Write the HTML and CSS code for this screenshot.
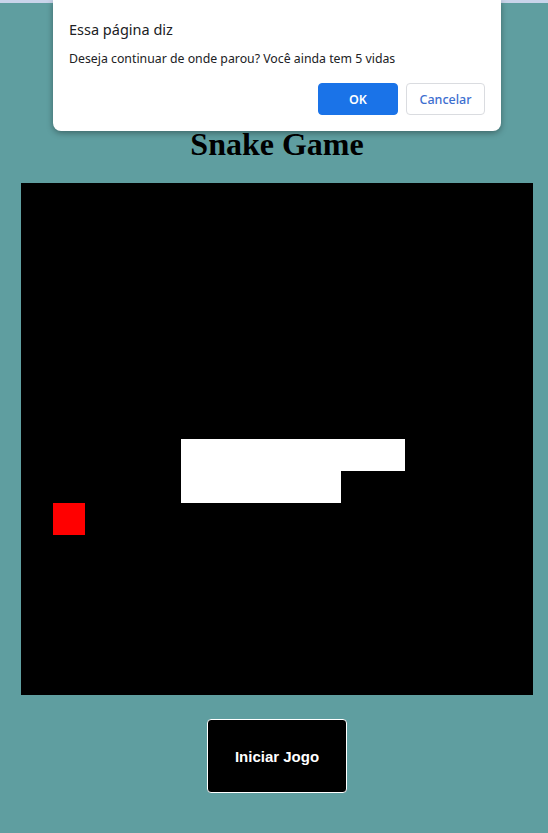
FILE: index.html
```html
<!DOCTYPE html>
<html lang="pt-BR">
<head>
<meta charset="utf-8">
<title>Snake Game</title>
<link rel="stylesheet" href="styles.css">
</head>
<body>
<div class="topbar"></div>
<main class="page">
  <h1 class="title">Snake Game</h1>
  <div class="board">
    <div class="cell snake" style="grid-column: 6 / 13; grid-row: 9;"></div>
    <div class="cell snake" style="grid-column: 6 / 11; grid-row: 10;"></div>
    <div class="cell food" style="grid-column: 2; grid-row: 11;"></div>
  </div>
  <button class="start">Iniciar Jogo</button>
</main>
<div class="dialog" role="dialog">
  <div class="dialog-title">Essa página diz</div>
  <div class="dialog-msg">Deseja continuar de onde parou? Você ainda tem 5 vidas</div>
  <div class="dialog-actions">
    <button class="btn btn-ok">OK</button>
    <button class="btn btn-cancel">Cancelar</button>
  </div>
</div>
</body>
</html>
```
FILE: styles.css
```css
html, body {
  margin: 0;
  padding: 0;
  background: #5f9ea0;
  height: 100%;
}
body {
  position: relative;
  overflow: hidden;
}
.topbar {
  height: 3px;
  background: #c9d4ea;
}
.page {
  width: 512px;
  margin-left: 21px;
  display: flex;
  flex-direction: column;
  align-items: center;
  padding-top: 123px;
}
.title {
  font-family: "Liberation Serif", serif;
  font-weight: bold;
  font-size: 32px;
  line-height: 37px;
  margin: 0 0 20px;
  color: #000;
}
.board {
  width: 512px;
  height: 512px;
  background: #000;
  display: grid;
  grid-template-columns: repeat(16, 32px);
  grid-template-rows: repeat(16, 32px);
}
.snake { background: #fff; }
.food { background: #ff0000; }
.start {
  margin-top: 24px;
  width: 140px;
  height: 74px;
  background: #000;
  color: #fff;
  border: 1px solid #fff;
  border-radius: 4px;
  font-family: "Liberation Sans", Arial, sans-serif;
  font-weight: bold;
  font-size: 15px;
}
.dialog {
  position: absolute;
  left: 53px;
  top: 0;
  width: 448px;
  height: 131px;
  box-sizing: border-box;
  background: #fff;
  border-radius: 0 0 8px 8px;
  box-shadow: 0 2px 6px rgba(0,0,0,0.35);
  padding: 19px 16px 0 16px;
  font-family: "Noto Sans", "Open Sans", sans-serif;
  color: #202124;
}
.dialog-title {
  font-size: 14.5px;
  line-height: 20px;
}
.dialog-msg {
  font-size: 12.3px;
  line-height: 18px;
  margin-top: 11px;
}
.dialog-actions {
  display: flex;
  justify-content: flex-end;
  gap: 8px;
  margin-top: 15px;
}
.btn {
  height: 32px;
  border-radius: 4px;
  font-family: "Noto Sans", "Open Sans", sans-serif;
  font-size: 12.5px;
  font-weight: 600;
}
.btn-ok {
  width: 80px;
  background: #1a73e8;
  border: 1px solid #1a73e8;
  color: #fff;
}
.btn-cancel {
  width: 79px;
  background: #fff;
  border: 1px solid #dadce0;
  color: #3d6fd0;
  font-weight: 500;
}
```
